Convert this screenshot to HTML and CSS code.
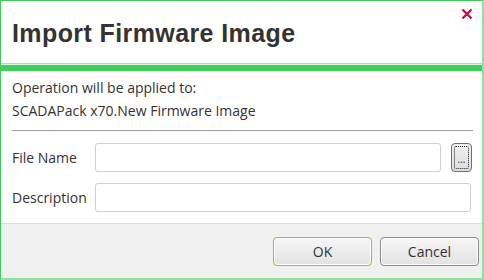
FILE: index.html
```html
<!DOCTYPE html>
<html>
<head>
<meta charset="utf-8">
<link rel="stylesheet" href="styles.css">
</head>
<body>
<div class="window">
  <div class="header">
    <h1 class="title">Import Firmware Image</h1>
    <span class="close">
      <svg width="12" height="12" viewBox="0 0 12 12"><path d="M1.5 1.5 L10.5 10.5 M10.5 1.5 L1.5 10.5" stroke="#c8104e" stroke-width="2.4" stroke-linecap="butt"/></svg>
    </span>
  </div>
  <div class="band"></div>
  <div class="content">
    <div class="info">
      <div class="line">Operation will be applied to:</div>
      <div class="line">SCADAPack x70.New Firmware Image</div>
    </div>
    <div class="rule"></div>
    <div class="form">
      <div class="row">
        <label class="label">File Name</label>
        <div class="input input-short"></div>
        <div class="browse"><span class="focus">...</span></div>
      </div>
      <div class="row">
        <label class="label">Description</label>
        <div class="input input-long"></div>
      </div>
    </div>
  </div>
  <div class="footer">
    <button class="btn btn-ok">OK</button>
    <button class="btn">Cancel</button>
  </div>
</div>
</body>
</html>
```
FILE: styles.css
```css
* { box-sizing: border-box; }
html, body { margin: 0; padding: 0; background: #fff; }
body { font-family: "Open Sans", "Noto Sans", sans-serif; color: #333; }
.window {
  width: 484px; height: 280px;
  border-top: 1px solid #3ecf5b;
  border-left: 1px solid #3ecf5b;
  border-right: 2px solid #8ee29f;
  border-bottom: 2px solid #8ee29f;
  display: flex; flex-direction: column;
  background: #fff;
}
.header {
  height: 62px; position: relative;
  display: flex; align-items: center;
  padding-left: 11px;
}
.title {
  margin: 0; font-family: "Liberation Sans", Arial, sans-serif;
  font-weight: bold; font-size: 25px; color: #333; letter-spacing: 0.4px;
  padding-top: 2px;
}
.close { position: absolute; right: 9px; top: 7px; width: 12px; height: 12px; display: block; }
.close svg { display: block; }
.band {
  height: 8px;
  background: linear-gradient(#a3e5b0 0 1px, #e0f7e5 1px 2px, #3ecf5b 2px 100%);
}
.content { flex: 1; padding: 5px 10px 0 11px; }
.info { font-size: 14px; line-height: 23px; }
.rule { height: 1px; background: #a0a0a0; margin: 8px 0 0 0; width: 461px; }
.form { padding-top: 12px; display: flex; flex-direction: column; gap: 11px; }
.row { display: flex; align-items: center; height: 29px; }
.label { width: 83px; font-size: 14px; }
.input {
  height: 29px; border: 1px solid #cfcfcf; border-radius: 3px; background: #fff;
}
.input-short { width: 346px; }
.input-long { width: 376px; }
.browse {
  margin-left: 10px; width: 21px; height: 29px;
  border: 1px solid #6f6f6f; border-radius: 4px;
  background: linear-gradient(#f2f2f2, #dcdcdc);
  padding: 2px; display: flex;
}
.focus {
  flex: 1; border: 1px dotted #222; border-radius: 2px;
  font-size: 10px; line-height: 1; display: flex; align-items: flex-end; justify-content: center;
  padding-bottom: 4px; color: #333;
}
.footer {
  height: 55px; background: #f0f0f0; border-top: 1px solid #dcdcdc;
  display: flex; justify-content: flex-end; align-items: center;
  gap: 8px; padding-right: 3px; padding-top: 1px;
}
.btn {
  width: 99px; height: 29px; border: 1px solid #8a8a8a; border-radius: 4px;
  background: linear-gradient(#f6f6f6, #e2e2e2);
  box-shadow: inset 0 0 0 1px #fff;
  font-family: "Open Sans", "Noto Sans", sans-serif; font-size: 14px; color: #333;
  padding: 0;
}
.btn-ok { border-color: #8cc152; }
```
